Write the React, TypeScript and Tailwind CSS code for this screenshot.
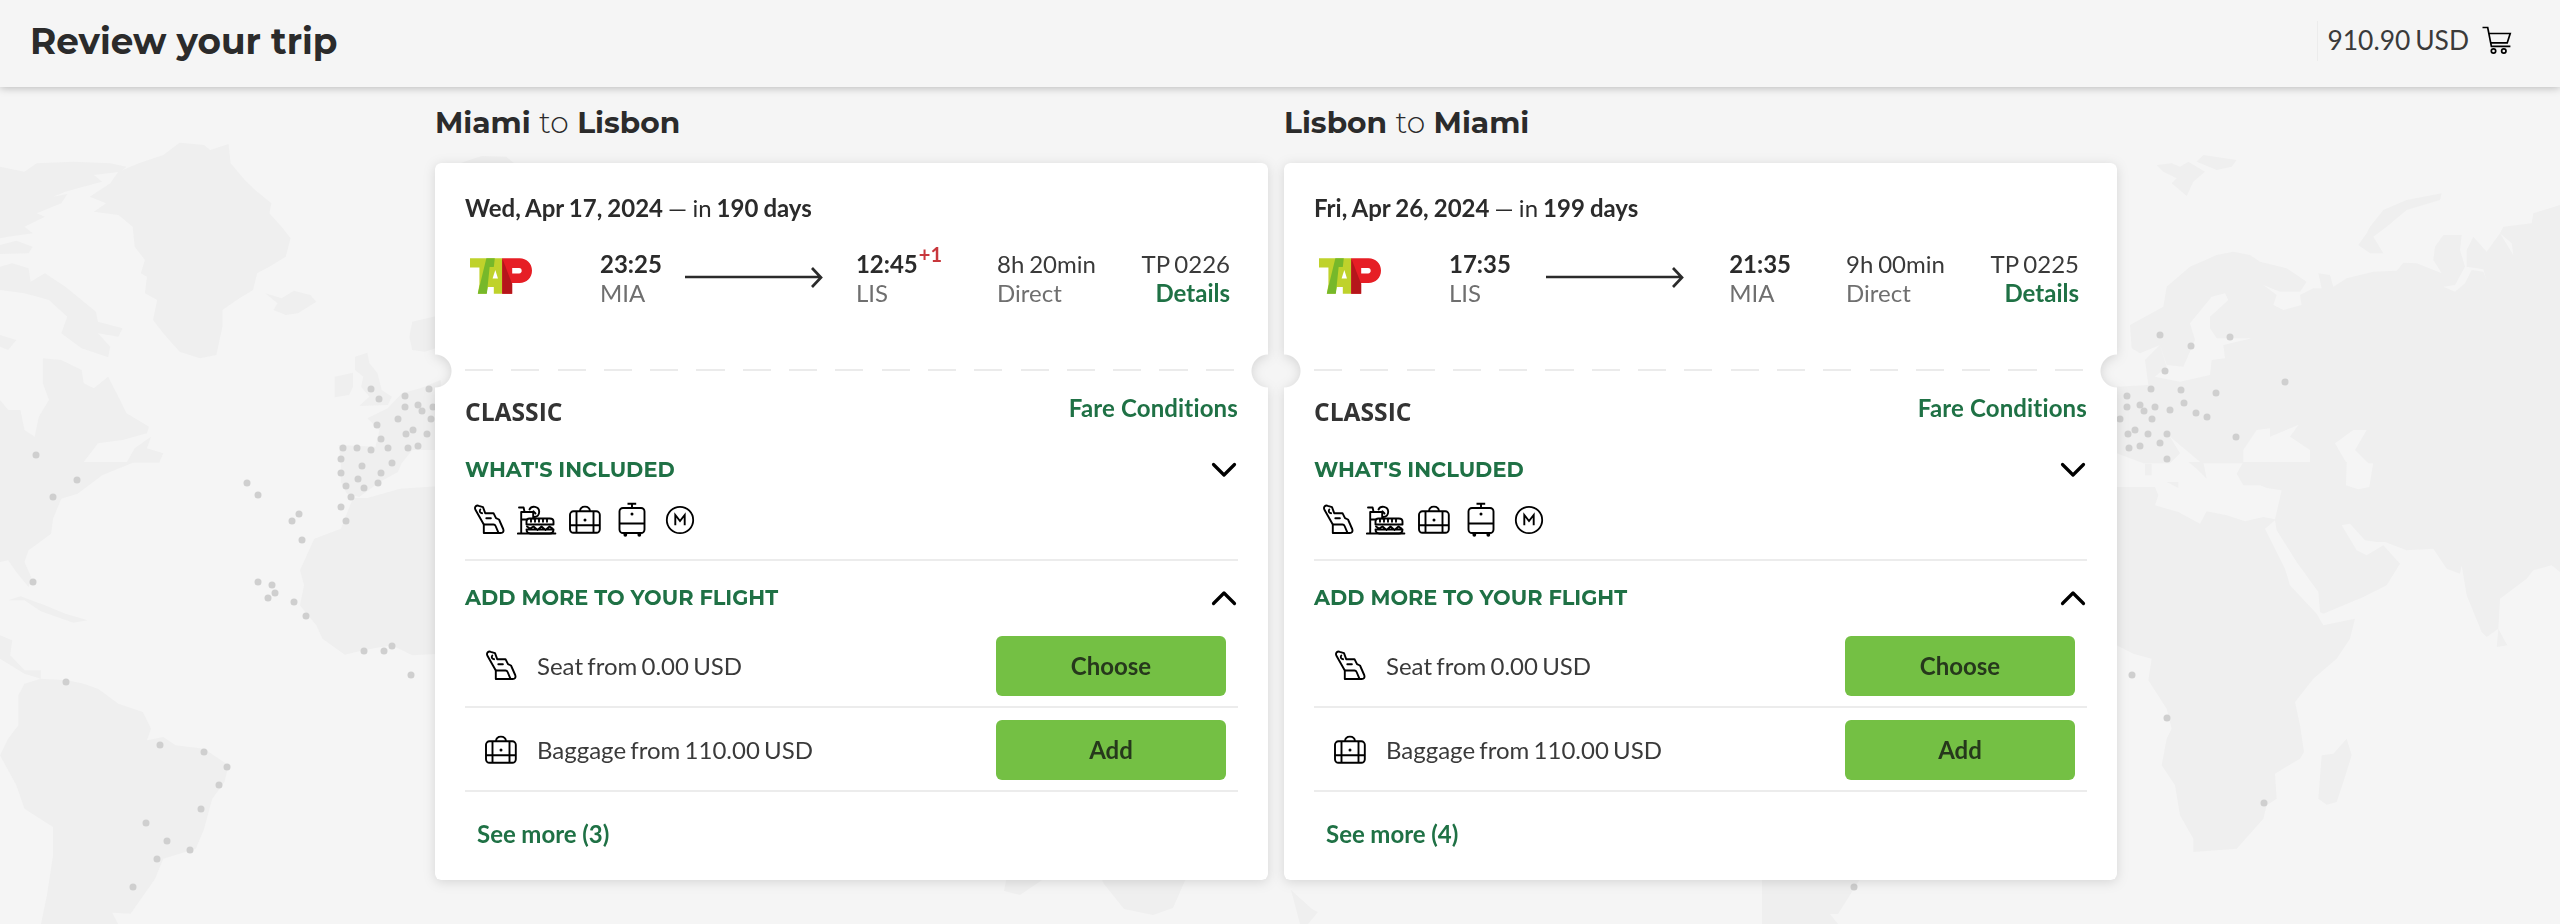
import type { ReactNode } from "react";
import clsx from "clsx";

type Extra = { icon: ReactNode; label: string; action: string };

type Flight = {
  from: string;
  to: string;
  date: string;
  days: number;
  departure: { time: string; code: string };
  arrival: { time: string; code: string; plusDays?: number };
  duration: string;
  number: string;
  more: number;
};

const flights: Flight[] = [
  {
    from: "Miami",
    to: "Lisbon",
    date: "Wed, Apr 17, 2024",
    days: 190,
    departure: { time: "23:25", code: "MIA" },
    arrival: { time: "12:45", code: "LIS", plusDays: 1 },
    duration: "8h 20min",
    number: "TP 0226",
    more: 3,
  },
  {
    from: "Lisbon",
    to: "Miami",
    date: "Fri, Apr 26, 2024",
    days: 199,
    departure: { time: "17:35", code: "LIS" },
    arrival: { time: "21:35", code: "MIA" },
    duration: "9h 00min",
    number: "TP 0225",
    more: 4,
  },
];

function SeatIcon() {
  return (
    <svg width="32" height="32" viewBox="0 0 32 32" fill="none" stroke="#000" strokeWidth="1.9" strokeLinejoin="round" strokeLinecap="round">
      <path d="M10.800 20.500 2.300 5.500C1.200 2.800 3.500.9 5.800 1.800l4.200 1.400 2.200 6h8.300l2.500 5 3 1.300 4.200 9.500c.9 2.500-.3 4-2.400 4H10.800z" />
      <path d="M10.800 20.500h9.700c1.300 0 1.700.5 2.100 1.500l2.600 6.200M7.300 5.500c-1.200 1.500-.4 3.500 1.800 3.700M13.300 14.200h4.600" />
    </svg>
  );
}

function MealIcon() {
  return (
    <svg width="40" height="32" viewBox="0 0 40 32" fill="none" stroke="#000" strokeWidth="1.9" strokeLinejoin="round" strokeLinecap="round">
      <path d="M.9 29.500h37.500M2 3.500h4.600l1 4.600M4.200 8h12v6.500M4.200 8v21.500M4.200 15.500h5.500" />
      <path d="M12.500 5.500c2-4.200 9.500-3.500 9.700 2.300 0 3-2 5.200-5 5.200M16.500 7.300l2 2.200" />
      <path d="M9.500 20.500v-3c0-1.800 1.200-3 3-3h20.300c2.200 0 3.700 1.200 3.700 3v3zM14 14.800v3M18 14.800v3M22 14.800v3M26 14.800v3M30 14.800v3" />
      <path d="M10 22.500l3 2 3.500-2 4 3.500 4-3.500 4 3.500 4-3.500 3 2M9.500 25.500h27c0 2.500-1.500 4-4 4h-19c-2.500 0-4-1.500-4-4z" />
    </svg>
  );
}

function BagIcon() {
  return (
    <svg width="32" height="32" viewBox="0 0 32 32" fill="none" stroke="#000" strokeWidth="1.9">
      <rect x="1" y="7.300" width="29.800" height="21.500" rx="3.500" />
      <path d="M7.500 7.500v21M24.500 7.500v21M1 21.300h30M11 7.300c.3-6.200 9.500-6.200 10 0" />
      <circle cx="16" cy="16" r="1.500" fill="#000" stroke="none" />
    </svg>
  );
}

function TrolleyIcon() {
  return (
    <svg width="28" height="36" viewBox="0 0 28 36" fill="none" stroke="#000" strokeWidth="1.9">
      <rect x="1.500" y="6" width="25" height="25" rx="3.500" />
      <path d="M1.500 21.500h25M14 6V1.800M9.500 1.800h8.700" />
      <circle cx="14" cy="12" r="1.500" fill="#000" stroke="none" />
      <circle cx="7.300" cy="32.800" r="1.900" fill="#000" stroke="none" />
      <circle cx="21.300" cy="32.800" r="1.900" fill="#000" stroke="none" />
    </svg>
  );
}

function MilesIcon() {
  return (
    <svg width="30" height="30" viewBox="0 0 30 30" fill="none" stroke="#000" strokeWidth="1.800">
      <circle cx="15" cy="15" r="13.200" />
      <path d="M10.300 20.200V10l4.700 6 4.700-6v10.200" strokeWidth="1.900" />
    </svg>
  );
}

function CartIcon() {
  return (
    <svg width="30" height="30" viewBox="0 0 30 30" fill="none" stroke="#000" strokeWidth="1.700">
      <path d="M.5 1.500h5.200l3.700 18.800h19M6.800 7.500h21.400l-3 9.400H8.700" />
      <circle cx="11.500" cy="25" r="2.200" />
      <circle cx="21.800" cy="25" r="2.200" />
    </svg>
  );
}

function TapLogo() {
  return (
    <svg width="62" height="36" viewBox="0 0 62.500 36">
      <path d="M0 0h33v36H24v-7h-6l-1.500 7H8l1.500-10V9.500H0z" fill="#bfd22b" />
      <path d="M16.500 0H25l-1 9h-4.200L17 36H7.800z" fill="#76b82a" />
      <path d="M25.500 12l2.700 8.500h-5.400z" fill="#fff" />
      <path d="M32.500 0H50c7 0 12.500 5 12.500 12.500S57 25 50 25h-7.500v11h-10z" fill="#e61e25" />
      <path d="M32.500 0 42.500 26v10h-10z" fill="#b5161b" />
      <path d="M42.500 10h7c3.500 0 3.500 5.500 0 5.500h-7z" fill="#fff" />
    </svg>
  );
}

function Chevron({ up }: { up?: boolean }) {
  return (
    <svg width="26" height="16" viewBox="0 0 26 16" className={clsx("mr-px", up && "rotate-180")} fill="none" stroke="#000" strokeWidth="3.200" strokeLinecap="round" strokeLinejoin="round">
      <path d="M2.500 2.500 13 13 23.500 2.500" />
    </svg>
  );
}

function Arrow() {
  return (
    <svg width="138" height="21" viewBox="0 0 138 21" fill="none" stroke="#2b2b2b" strokeWidth="2.700">
      <path d="M0 10h135M127 1l9 9.500-9 9.500" />
    </svg>
  );
}

const leftDots: [number, number][] = [
  [371, 389], [379, 399], [429, 389], [405, 396], [405, 407], [418, 405], [422, 411], [433, 407], [398, 419],
  [431, 419], [377, 425], [413, 430], [406, 434], [427, 434], [381, 439], [343, 448], [357, 448], [371, 450],
  [388, 448], [408, 448], [418, 446], [341, 459], [392, 463], [362, 466], [341, 473], [381, 473], [358, 479],
  [346, 486], [364, 488], [378, 483], [351, 497], [341, 507], [346, 521], [36, 455], [77, 480], [53, 497],
  [247, 483], [258, 495], [299, 514], [292, 521], [302, 540], [33, 582], [258, 582], [272, 585], [275, 593],
  [268, 598], [294, 602], [306, 616], [364, 651], [384, 651], [392, 646], [411, 675], [66, 682], [160, 745],
  [204, 752], [227, 767], [219, 785], [201, 809], [146, 823], [167, 841], [190, 850], [157, 859], [133, 887], [1854, 887],
];

const rightDots: [number, number][] = [
  [2160, 335], [2230, 337], [2191, 346], [2165, 371], [2285, 382], [2151, 389], [2181, 390], [2216, 393],
  [2127, 396], [2184, 403], [2127, 407], [2140, 405], [2144, 411], [2155, 407], [2170, 410], [2196, 413],
  [2207, 417], [2120, 419], [2152, 419], [2128, 434], [2135, 430], [2148, 434], [2167, 434], [2236, 437],
  [2160, 443], [2129, 448], [2140, 446], [2167, 459], [2132, 675], [2167, 718], [2264, 803],
];

function WorldMap() {
  return (
    <svg className="absolute inset-0 h-[924px] w-full" viewBox="0 0 2560 924" aria-hidden="true">
      <g fill="#efefef">
        {/* Canada, Greenland, western Europe */}
        <g transform="scale(.40816 .33333)">
          <path d="M0 500L60 515 90 490 180 485 270 490 310 500 295 515 230 525 250 545 220 555 160 575 130 590 165 582 150 610 90 640 110 650 60 680 80 700 20 710 0 715Z" />
          <path d="M0 735L40 722 80 740 70 760 0 762ZM0 800L30 790 70 805 75 845 110 820 160 860 205 905 235 935 240 965 300 985 290 1010 240 1000 270 1040 265 1072 200 1045 150 1000 165 950 120 900 60 880 0 870ZM0 1005L40 1020 20 1050 0 1040Z" />
          <path d="M400 465L440 428 500 435 515 450 560 432 565 490 600 540 625 570 665 610 660 640 690 680 712 715 700 770 660 800 630 820 620 870 580 900 545 930 545 980 530 1065 490 1075 440 1055 400 1000 375 960 385 900 355 880 360 830 345 820 355 780 330 740 325 680 290 645 230 635 260 610 220 590 270 550 290 515 340 490Z" />
          <path d="M650 880L690 895 720 872 760 885 775 905 730 940 700 945 670 930 680 910Z" />
          <path d="M0 1200L20 1230 50 1230 60 1290 85 1310 95 1250 120 1200 105 1150 105 1075 150 1080 200 1110 205 1150 230 1165 265 1130 290 1190 310 1240 365 1280 360 1300 300 1320 240 1330 205 1386 0 1388ZM310 1388L330 1345 370 1310 360 1345 400 1360 390 1388Z" />
          <path d="M870 1070L900 1058 905 1090 925 1120 935 1170 960 1190 950 1215 880 1218 905 1190 885 1160 890 1130 870 1110ZM820 1130L865 1118 865 1160 855 1185 820 1192ZM1080 945L1010 965 1003 1010 1010 1050 1040 1055 1080 1040Z" />
          <path d="M1080 1140L1030 1165 985 1180 950 1225 900 1255 930 1290 920 1340 830 1335 835 1388 985 1388 1010 1350 1080 1350Z" />
          <path d="M1130 488L1180 468 1240 470 1270 500Z" />
        </g>
        {/* Americas, west Africa */}
        <g transform="translate(0 462) scale(.40816 .33333)">
          <path d="M835 0L835 60 850 95 880 105 930 60 975 30 985 0ZM1080 72L980 80 900 108 865 108 835 200 770 230 735 325 745 370 735 430 775 490 790 530 845 578 890 565 960 550 1010 580 1080 575Z" />
          <path d="M0 0H330L250 40 190 95 150 110 130 170 125 215 70 265 60 300 78 350 70 375 40 330 20 295 0 300ZM20 415L50 403 110 430 160 455 215 475 180 482 100 448 60 415ZM0 520L30 535 25 580 60 625 100 625 100 650 60 635 0 590Z" />
          <path d="M45 700L60 665 100 650 165 655 205 665 240 680 290 725 350 750 370 800 360 835 400 825 430 850 500 860 560 910 550 960 520 1010 500 1100 480 1160 400 1190 380 1250 340 1320 320 1355 275 1352 290 1388 100 1388 115 1300 130 1180 130 1095 60 1040 40 970 0 880 20 830 45 790Z" />
        </g>
        {/* Northern Europe and Asia */}
        <g transform="translate(2100 0) scale(.33333)">
          <path d="M170 495L215 490 240 500 265 485 315 515 280 545 260 588 215 550 230 535 190 515ZM290 485L310 465 410 480 395 500 350 510ZM1025 580L1020 600 920 630 860 680 820 710 850 760 810 760 775 735 800 700 810 680 850 630 920 600Z" />
          <path d="M90 975L190 920 200 860 270 800 350 765 400 755 450 765 480 785 560 805 620 845 600 875 540 875 490 855 530 885 520 915 550 930 605 915 600 885 640 865 665 865 655 820 690 825 700 860 740 835 820 815 890 812 910 788 950 790 1025 820 1000 780 1005 740 1030 705 1085 705 1080 750 1095 800 1065 855 1030 860 1065 875 1095 850 1115 810 1150 815 1160 842 1150 808 1100 800 1100 750 1120 710 1160 755 1200 700 1240 765 1235 730 1200 700 1210 680 1295 670 1300 640 1380 615V1390H805L765 1350 800 1290 760 1290 705 1330 740 1390H630L630 1350 570 1310 595 1275 510 1310 510 1285 470 1290 430 1350 430 1390H305L210 1310 240 1360 210 1390H130L50 1360V1160L145 1155 135 1080 180 1035 200 1100 165 1130 240 1145 330 1125 335 1080 375 1075 370 1035 455 1015 350 1015 330 985 330 950 385 900 375 880 335 890 270 970 285 1020 250 1100 200 1095 180 1035 120 1060 95 1045Z" />
        </g>
        {/* Africa, Arabia, India */}
        <g transform="translate(2100 462) scale(.33333)">
          <path d="M50 75H165L175 100 165 130 235 150 300 185 320 148 380 160 435 178 490 165 525 172 545 85 500 78 480 70 430 70 410 35 430 0H740L738 70 775 82 808 75 820 0H1380V330L1355 310 1300 325 1280 350 1200 410 1195 500 1160 525 1145 510 1100 400 1085 310 1080 335 1040 320 1000 260 920 265 855 240 830 240 795 235 750 185 725 190 770 265 800 280 850 250 900 305 860 370 790 405 670 455 660 450 655 390 590 300 530 205 525 175 495 200 555 320 570 370 650 455 670 490 765 470 750 530 710 590 640 650 585 720 600 790 612 870 600 890 525 935 530 1010 500 1030 490 1070 410 1160 280 1170 280 1130 240 1060 225 970 185 910 200 830 215 800 200 740 145 655 155 590 100 575 50 550ZM1190 555L1195 500 1222 550ZM740 830L755 880 730 960 710 1020 680 1028 655 1010 665 880 700 875ZM265 0H310L320 50 290 20ZM200 60H235V78ZM135 5H155V40H135Z" />
        </g>
        {/* Australia, New Zealand */}
        <path d="M1007 876H1048L1020 895 1004 891ZM1100 876H1187L1173 908 1153 915 1124 909 1104 884ZM1291 890L1312 909 1318 912 1308 924H1300ZM1762 876H1862L1838 914H1830L1838 924H1762Z" />
      </g>
      <g fill="#cfcfcf">
        {leftDots.map(([x, y]) => (
          <circle key={`${x}-${y}`} cx={x} cy={y} r="3.500" />
        ))}
        {rightDots.map(([x, y]) => (
          <circle key={`${x}-${y}`} cx={x} cy={y} r="3.500" />
        ))}
      </g>
    </svg>
  );
}

function SectionTitle({ children, up, className }: { children: ReactNode; up?: boolean; className?: string }) {
  return (
    <div className={clsx("flex items-center justify-between", className)}>
      <h4 className="font-[Montserrat,Inter,sans-serif] text-[20.9px] leading-7 font-bold text-[#1f7145] [word-spacing:normal]">{children}</h4>
      <Chevron up={up} />
    </div>
  );
}

function ExtraRow({ icon, label, action }: Extra) {
  return (
    <div className="flex h-[84px] items-center border-b-2 border-[#ececec] pt-px pr-3 pl-5">
      {icon}
      <span className="ml-5 flex-1 text-[#3a3a3a] [word-spacing:-1.9px]">{label}</span>
      <button className="h-[60px] w-[230px] rounded-md bg-[#74c044] font-bold text-[#26381c]">{action}</button>
    </div>
  );
}

function FlightCard({ flight }: { flight: Flight }) {
  return (
    <section className="w-[833px]">
      <h2 className="font-[Montserrat,Inter,sans-serif] text-[29.7px] leading-9 font-bold text-[#2b2b2b]">
        {flight.from} <span className="font-light">to</span> {flight.to}
      </h2>

      {/* the shadow sits on the wrapper so that it follows the ticket notches */}
      <div className="mt-[23px] drop-shadow-[0_2px_6px_rgba(0,0,0,0.13)]">
        <article className="h-[717px] rounded-md bg-white px-[30px] pt-[31px] text-2xl leading-7 text-[#2b2b2b] [font-variant-ligatures:none] [word-spacing:-1.3px] [mask-composite:intersect] [mask-image:radial-gradient(circle_at_0_208px,transparent_16px,#000_17px),radial-gradient(circle_at_100%_208px,transparent_16px,#000_17px)]">
          <p className="font-bold [word-spacing:-0.8px]">
            {flight.date} <span className="font-normal">— in</span> {flight.days} days
          </p>

          <div className="mt-[28px] flex items-start pr-2 leading-[28.5px]">
            <div className="w-[135px] pt-2 pl-[5px]">
              <TapLogo />
            </div>
            <div>
              <p className="font-bold">{flight.departure.time}</p>
              <p className="text-[#6f6f6f]">{flight.departure.code}</p>
            </div>
            <div className="flex flex-1 justify-center pt-[17px] pr-[10px]">
              <Arrow />
            </div>
            <div>
              <p className="flex font-bold">
                {flight.arrival.time}
                {flight.arrival.plusDays && (
                  <span className="-mt-[10px] ml-px text-xl leading-7 text-[#c8373c]">+{flight.arrival.plusDays}</span>
                )}
              </p>
              <p className="text-[#6f6f6f]">{flight.arrival.code}</p>
            </div>
            <div className="ml-[55px] w-[123px]">
              <p className="text-[#3a3a3a]">{flight.duration}</p>
              <p className="text-[#6f6f6f]">Direct</p>
            </div>
            <div className="w-[110px] text-right">
              <p className="text-[#3a3a3a]">{flight.number}</p>
              <a className="font-bold text-[#1f7145]">Details</a>
            </div>
          </div>

          <div className="mt-[62px] h-[2px] bg-[repeating-linear-gradient(90deg,#ebebeb_0_28px,transparent_28px_46.3px)]" />

          <div className="mt-[23px] flex items-start justify-between">
            <h3 className="mt-[4px] font-[Open_Sans,sans-serif] text-[24.6px] leading-7 font-bold text-[#333]">CLASSIC</h3>
            <a className="font-bold tracking-[0.15px] text-[#1f7145] [word-spacing:normal]">Fare Conditions</a>
          </div>

          <SectionTitle className="mt-[30px]">WHAT'S INCLUDED</SectionTitle>
          <div className="mt-[18px] flex h-9 items-center pl-2">
            <SeatIcon />
            <div className="ml-3">
              <MealIcon />
            </div>
            <div className="ml-3">
              <BagIcon />
            </div>
            <div className="ml-[17px]">
              <TrolleyIcon />
            </div>
            <div className="ml-[19px]">
              <MilesIcon />
            </div>
          </div>

          <hr className="mt-[21px] border-t-2 border-[#ececec]" />

          <SectionTitle up className="mt-[23px]">
            ADD MORE TO YOUR FLIGHT
          </SectionTitle>
          <div className="mt-[12px]">
            <ExtraRow icon={<SeatIcon />} label="Seat from 0.00 USD" action="Choose" />
            <ExtraRow icon={<BagIcon />} label="Baggage from 110.00 USD" action="Add" />
          </div>
          <a className="mt-[28px] ml-3 block font-bold text-[#1f7145] [word-spacing:-0.3px]">See more ({flight.more})</a>
        </article>
      </div>
    </section>
  );
}

export default function App() {
  return (
    <div className="relative flex h-[924px] flex-col overflow-hidden bg-[#f5f5f5] font-[Lato,sans-serif]">
      <WorldMap />

      <header className="relative flex h-[87px] items-center justify-between bg-[#f5f5f5] pr-[48px] pb-[6px] pl-[30px] shadow-[0_1px_8px_rgba(0,0,0,0.25)]">
        <h1 className="font-[Montserrat,Inter,sans-serif] text-[35.8px] leading-10 font-bold text-[#2b2b2b]">Review your trip</h1>
        <div className="flex h-10 items-center border-l border-[#ececec] pl-[9px] text-[26.4px] text-[#3a3a3a] [word-spacing:-1.8px]">
          <span className="mr-[13px]">910.90 USD</span>
          <CartIcon />
        </div>
      </header>

      <main className="relative flex justify-center gap-4 pt-[17px] pr-[8px]">
        {flights.map((flight) => (
          <FlightCard key={flight.number} flight={flight} />
        ))}
      </main>
    </div>
  );
}
